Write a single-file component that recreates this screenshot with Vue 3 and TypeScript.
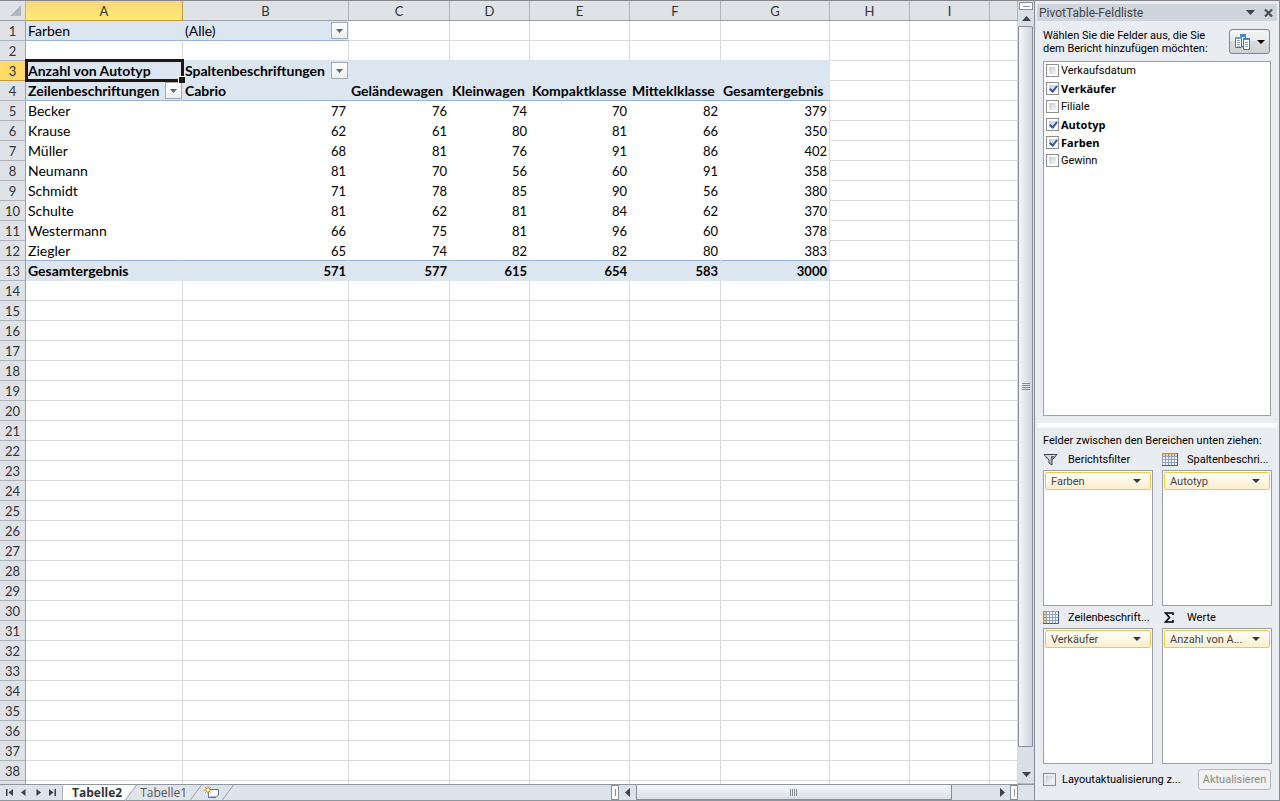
<script setup lang="ts">
import { ref } from 'vue'

interface Field { name: string; checked: boolean }
interface Area { key: string; label: string; icon: string; item: string }

const columns = ['A', 'B', 'C', 'D', 'E', 'F', 'G', 'H', 'I', '']
const pivot: Record<number, string[]> = {
  1: ['Farben', '(Alle)'],
  3: ['Anzahl von Autotyp', 'Spaltenbeschriftungen'],
  4: ['Zeilenbeschriftungen', 'Cabrio', 'Geländewagen', 'Kleinwagen', 'Kompaktklasse', 'Mitteklklasse', 'Gesamtergebnis'],
  5: ['Becker', '77', '76', '74', '70', '82', '379'],
  6: ['Krause', '62', '61', '80', '81', '66', '350'],
  7: ['Müller', '68', '81', '76', '91', '86', '402'],
  8: ['Neumann', '81', '70', '56', '60', '91', '358'],
  9: ['Schmidt', '71', '78', '85', '90', '56', '380'],
  10: ['Schulte', '81', '62', '81', '84', '62', '370'],
  11: ['Westermann', '66', '75', '81', '96', '60', '378'],
  12: ['Ziegler', '65', '74', '82', '82', '80', '383'],
  13: ['Gesamtergebnis', '571', '577', '615', '654', '583', '3000'],
}
const numberedRows = 38

const fields = ref<Field[]>([
  { name: 'Verkaufsdatum', checked: false },
  { name: 'Verkäufer', checked: true },
  { name: 'Filiale', checked: false },
  { name: 'Autotyp', checked: true },
  { name: 'Farben', checked: true },
  { name: 'Gewinn', checked: false },
])
const deferLayout = ref(false)

const areas: Area[] = [
  { key: 'filter', label: 'Berichtsfilter', icon: 'filter', item: 'Farben' },
  { key: 'cols', label: 'Spaltenbeschri...', icon: 'cols', item: 'Autotyp' },
  { key: 'rows', label: 'Zeilenbeschrift...', icon: 'rows', item: 'Verkäufer' },
  { key: 'values', label: 'Werte', icon: 'sigma', item: 'Anzahl von A...' },
]

const cellText = (row: number, col: number): string => pivot[row]?.[col] ?? ''
const hasFilter = (row: number, col: number): boolean =>
  (row === 1 && col === 1) || (row === 3 && col === 1) || (row === 4 && col === 0)

function cellClass(row: number, col: number): Record<string, boolean> {
  const inPivot = col < 7
  return {
    num: row >= 5 && row <= 13 && col > 0,
    bold: row === 3 || row === 4 || row === 13,
    band: (row === 1 && col < 2) || (inPivot && (row === 3 || row === 4 || row === 13)),
    plain: inPivot && row >= 5 && row <= 12,
    edge: col === 6 && row >= 5 && row <= 12,
    rule: (row === 1 && col < 2) || (inPivot && (row === 4 || row === 12)),
    above: inPivot && row === 2,
    active: row === 3 && col === 0,
  }
}
</script>

<template>
  <div class="app">
    <main class="book">
      <div class="grid-area">
        <div class="grid">
          <table>
            <colgroup>
              <col class="w-head" />
              <col v-for="(c, i) in columns" :key="i" :class="'w-' + (c || 'rest')" />
            </colgroup>
            <thead>
              <tr>
                <th class="corner"><svg width="12" height="12" viewBox="0 0 12 12"><path d="M11 0V11H0Z" fill="#b3b7bb" /></svg></th>
                <th v-for="(c, i) in columns" :key="i" scope="col" :class="{ selected: c === 'A' }">{{ c }}</th>
              </tr>
            </thead>
            <tbody>
              <tr v-for="r in numberedRows + 1" :key="r">
                <th scope="row" :class="{ selected: r === 3 }">{{ r > numberedRows ? '' : r }}</th>
                <td v-for="(c, i) in columns" :key="i" :class="cellClass(r, i)">
                  <span v-if="cellText(r, i)">{{ cellText(r, i) }}</span>
                  <button v-if="hasFilter(r, i)" class="drop" type="button" aria-label="Filter">
                    <svg width="7" height="4" viewBox="0 0 7 4"><path d="M0 0H7L3.500 4Z" fill="#5c6570" /></svg>
                  </button>
                  <i v-if="r === 3 && i === 0" class="cursor"></i>
                </td>
              </tr>
            </tbody>
          </table>
        </div>
        <div class="vscroll">
          <div class="split-v"></div>
          <button type="button" class="arrow-v" aria-label="Nach oben"><svg width="9" height="5" viewBox="0 0 9 5"><path d="M4.500 0L9 5H0Z" fill="#40444a" /></svg></button>
          <div class="thumb-v"><svg width="8" height="8" viewBox="0 0 8 8"><path d="M0 .5H8M0 2.500H8M0 4.500H8M0 6.500H8" stroke="#868c94" /></svg></div>
          <button type="button" class="arrow-v down" aria-label="Nach unten"><svg width="9" height="5" viewBox="0 0 9 5"><path d="M0 0H9L4.500 5Z" fill="#40444a" /></svg></button>
        </div>
      </div>

      <div class="bottom">
        <nav class="tabs">
          <div class="steps">
            <button type="button" aria-label="Erstes Blatt"><svg width="7" height="7" viewBox="0 0 7 7"><path d="M0 0H1.500V7H0ZM7 0V7L2.500 3.500Z" fill="#3b4048" /></svg></button>
            <button type="button" aria-label="Vorheriges Blatt"><svg width="7" height="7" viewBox="0 0 7 7"><path d="M5.500 0V7L1 3.500Z" fill="#3b4048" /></svg></button>
            <button type="button" aria-label="Nächstes Blatt"><svg width="7" height="7" viewBox="0 0 7 7"><path d="M1.500 0V7L6 3.500Z" fill="#3b4048" /></svg></button>
            <button type="button" aria-label="Letztes Blatt"><svg width="7" height="7" viewBox="0 0 7 7"><path d="M0 0V7L4.500 3.500ZM5.500 0H7V7H5.500Z" fill="#3b4048" /></svg></button>
          </div>
          <button type="button" class="tab current">Tabelle2</button>
          <svg class="slant" width="12" height="16" viewBox="0 0 12 16"><path d="M0 0H11.500L0 16Z" fill="#fff" /><path d="M11.500 0L0 15.500" stroke="#989ea6" fill="none" /></svg>
          <button type="button" class="tab">Tabelle1</button>
          <svg class="slant" width="12" height="16" viewBox="0 0 12 16"><path d="M11.500 0L0 15.500" stroke="#989ea6" fill="none" /></svg>
          <button type="button" class="tab new" aria-label="Tabellenblatt einfügen">
            <svg width="16" height="13" viewBox="0 0 16 13">
              <path d="M4.500 3.500H14.500V9L12 11.500H4.500Z" fill="#fff" stroke="#596f9e" />
              <path d="M6 10H12L14 8V11H6Z" fill="#a9bbdc" />
              <path d="M4 0V8M0 4H8M1.200 1.200L6.800 6.800M6.800 1.200L1.200 6.800" stroke="#df8b20" />
              <circle cx="4" cy="4" r="1.500" fill="#fff3b8" />
            </svg>
          </button>
          <svg class="slant" width="12" height="16" viewBox="0 0 12 16"><path d="M11.500 0L0 15.500" stroke="#989ea6" fill="none" /></svg>
        </nav>
        <div class="hscroll">
          <div class="split-h"></div>
          <button type="button" class="arrow-h" aria-label="Nach links"><svg width="5" height="9" viewBox="0 0 5 9"><path d="M5 0V9L0 4.500Z" fill="#40444a" /></svg></button>
          <div class="track-h"><div class="thumb-h"><svg width="8" height="7" viewBox="0 0 8 7"><path d="M.5 0V7M2.500 0V7M4.500 0V7M6.500 0V7" stroke="#868c94" /></svg></div></div>
          <button type="button" class="arrow-h right" aria-label="Nach rechts"><svg width="5" height="9" viewBox="0 0 5 9"><path d="M0 0V9L5 4.500Z" fill="#40444a" /></svg></button>
          <div class="split-h"></div>
        </div>
        <div class="bottom-corner"></div>
      </div>
    </main>

    <aside class="pane">
      <header class="pane-title">
        <h2>PivotTable-Feldliste</h2>
        <button type="button" aria-label="Optionen"><svg width="9" height="5" viewBox="0 0 9 5"><path d="M0 0H9L4.500 5Z" fill="#3f4349" /></svg></button>
        <button type="button" aria-label="Schließen"><svg width="9" height="8" viewBox="0 0 9 8"><path d="M1 .5L8 7.500M8 .5L1 7.500" stroke="#4b4e53" stroke-width="2.200" /></svg></button>
      </header>

      <div class="intro">
        <p>Wählen Sie die Felder aus, die Sie<br />dem Bericht hinzufügen möchten:</p>
        <button type="button" class="layout" aria-label="Layout">
          <svg width="16" height="16" viewBox="0 0 16 16">
            <path d="M5.500 .5H10.500V12.500H5.500Z" fill="#fff" stroke="#4a70b4" /><path d="M5 0H11V3H5Z" fill="#4f83d6" />
            <path d="M.5 3.500H6.500V13.500H.5Z" fill="#fff" stroke="#4a70b4" /><path d="M0 3H7V5H0Z" fill="#6e9be2" /><path d="M2 6.500H5M2 8.500H5M2 10.500H5M2 12.500H5" stroke="#8ba7d2" />
            <path d="M8.500 4.500H14.500V15.500H8.500Z" fill="#fff" stroke="#4a70b4" /><path d="M8 4H15V6H8Z" fill="#4f83d6" /><path d="M10 8.500H13M10 10.500H13M10 12.500H13" stroke="#8ba7d2" />
          </svg>
          <svg width="8" height="4" viewBox="0 0 8 4"><path d="M0 0H8L4 4Z" fill="#000" /></svg>
        </button>
      </div>

      <div class="fields">
        <label v-for="f in fields" :key="f.name" :class="{ on: f.checked }">
          <input v-model="f.checked" type="checkbox" /><span>{{ f.name }}</span>
        </label>
      </div>

      <div class="divider"></div>

      <p class="hint">Felder zwischen den Bereichen unten ziehen:</p>
      <div class="areas">
        <section v-for="a in areas" :key="a.key">
          <h3>
            <svg v-if="a.icon === 'filter'" width="16" height="13" viewBox="0 0 16 13">
              <path d="M1 1.500H14L9 7V12L6 10V7Z" fill="#d5d8dc" stroke="#3d4146" /><path d="M8 3H12L8.500 7V11L7.500 10Z" fill="#6c7077" />
            </svg>
            <svg v-else-if="a.icon === 'sigma'" width="16" height="13" viewBox="0 0 16 13">
              <path d="M11 4V2H3.500L7.500 6.500L3.500 11H11V9" fill="none" stroke="#000" stroke-width="1.600" />
            </svg>
            <svg v-else width="16" height="13" viewBox="0 0 16 13">
              <path d="M0 0H16V13H0Z" fill="#8ca3c4" />
              <path d="M1 1H3V3H1ZM4 1H6V3H4ZM7 1H9V3H7ZM10 1H12V3H10ZM13 1H15V3H13ZM1 4H3V6H1ZM4 4H6V6H4ZM7 4H9V6H7ZM10 4H12V6H10ZM13 4H15V6H13ZM1 7H3V9H1ZM4 7H6V9H4ZM7 7H9V9H7ZM10 7H12V9H10ZM13 7H15V9H13ZM1 10H3V12H1ZM4 10H6V12H4ZM7 10H9V12H7ZM10 10H12V12H10ZM13 10H15V12H13Z" fill="#f5f9ff" />
              <template v-if="a.icon === 'cols'"><path d="M0 0H16V3H0Z" fill="#b9903f" /><path d="M1 1H3V3H1ZM4 1H6V3H4ZM7 1H9V3H7ZM10 1H12V3H10ZM13 1H15V3H13Z" fill="#f5d27a" /></template>
              <template v-else><path d="M0 0H3V13H0Z" fill="#b9903f" /><path d="M1 1H3V3H1ZM1 4H3V6H1ZM1 7H3V9H1ZM1 10H3V12H1Z" fill="#f5d27a" /></template>
              <path d="M15.500 0V12.500H0" fill="none" stroke="#3f5f95" />
            </svg>
            <span>{{ a.label }}</span>
          </h3>
          <div class="well">
            <button type="button" class="chip">
              <span>{{ a.item }}</span>
              <svg width="8" height="4" viewBox="0 0 8 4"><path d="M0 0H8L4 4Z" fill="#33363b" /></svg>
            </button>
          </div>
        </section>
      </div>

      <footer>
        <label><input v-model="deferLayout" type="checkbox" /><span>Layoutaktualisierung z...</span></label>
        <button type="button" class="update" disabled>Aktualisieren</button>
      </footer>
    </aside>
  </div>
</template>

<style>
body { margin: 0; }
</style>

<style scoped>
* { box-sizing: border-box; }
button { padding: 0; border: 0; background: none; font: inherit; color: inherit; display: flex; align-items: center; justify-content: center; }
svg { display: block; flex: none; }
h2, h3, p { margin: 0; font: inherit; }

.app { display: flex; height: 100vh; overflow: hidden; border-top: 1px solid #86868a; background: #e9edf2; font-family: Roboto, "Noto Sans", sans-serif; font-size: 11px; color: #000; }
.book { flex: 1; min-width: 0; display: flex; flex-direction: column; }
.grid-area { flex: 1; min-height: 0; display: flex; }
.grid { flex: 1; min-width: 0; overflow: hidden; background: #fff; }

table { table-layout: fixed; width: 100%; border-collapse: separate; border-spacing: 0; font: 14px/18px Lato, sans-serif; }
.w-head { width: 26px; }
.w-A { width: 157px; }
.w-B { width: 166px; }
.w-C { width: 101px; }
.w-D, .w-H, .w-I { width: 80px; }
.w-E { width: 100px; }
.w-F { width: 91px; }
.w-G { width: 109px; }
th, td { height: 20px; padding: 0 2px; white-space: nowrap; overflow: hidden; }
th { font-weight: 400; font-size: 13px; text-align: center; color: #333; background: #dfe2e7; border-right: 1px solid #aeb3b9; border-bottom: 1px solid #aeb3b9; }
thead th { border-bottom-color: #989ea5; }
tbody th { border-right-color: #989ea5; }
th.selected { background: #ffda66; border-color: #c99a3c; }
thead th.selected { background: linear-gradient(#f9d57c, #ffec72); }
.corner svg { margin-left: 8px; }
td { position: relative; border-right: 1px solid #d9dadb; border-bottom: 1px solid #d9dadb; text-align: left; }
td.num { text-align: right; font-size: 13px; }
td.bold { font-weight: 700; }
td.plain { border-color: #fff; }
td.edge { border-right-color: #d9dadb; }
td.band { background: #dce6f1; border-color: #dce6f1; }
td.above { border-bottom-color: #dce6f1; }
td.rule { border-bottom-color: #95b3d7; }
td.active { overflow: visible; }
.drop { position: absolute; right: 0; top: 1px; width: 17px; height: 17px; border: 1px solid #a3aab3; background: linear-gradient(#fff, #eceff3); }
.cursor { position: absolute; z-index: 1; top: -2px; right: -2px; bottom: -2px; left: -1px; border: 3px solid #1f1713; }
.cursor::after { content: ""; position: absolute; right: -4px; bottom: -4px; width: 6px; height: 6px; background: #1f1713; border: 1px solid #fff; border-right: 0; border-bottom: 0; }

.vscroll { width: 16px; display: flex; flex-direction: column; background: #d9dfe8; }
.split-v { height: 8px; margin: 1px 1px 0; border: 1px solid #8b9099; background: linear-gradient(#8b9099, #8b9099) center / 7px 1px no-repeat #fff; }
.arrow-v { height: 16px; }
.arrow-v.down { height: 37px; padding-top: 18px; border-bottom: 1px solid #b5bcc6; }
.thumb-v { flex: 1; display: flex; align-items: center; justify-content: center; border: 1px solid #868d97; border-radius: 1px; background: linear-gradient(90deg, #f3f6fa, #cfd5dd); margin-right: 1px; }

.bottom { height: 17px; display: flex; background: #dde3eb; border-top: 1px solid #8e969f; border-bottom: 1px solid #8e969f; }
.tabs { flex: 1; display: flex; min-width: 0; font: 12px/15px "Open Sans", sans-serif; color: #555; }
.steps { width: 63px; display: flex; justify-content: space-around; padding: 0 2px; border-right: 1px solid #aab1ba; }
.tab { padding: 0 3px; background: #e2e6ec; }
.tab.current { padding-left: 9px; background: #fff; font-weight: 700; color: #333; }
.tab.new { width: 20px; padding: 0; background: none; }
.hscroll { width: 407px; display: flex; }
.split-h { width: 8px; border: 1px solid #8b9099; background: linear-gradient(#8b9099, #8b9099) center / 1px 7px no-repeat #fff; }
.arrow-h { width: 17px; }
.arrow-h.right { width: 15px; }
.track-h { flex: 1; display: flex; }
.thumb-h { width: 88%; display: flex; align-items: center; justify-content: center; border: 1px solid #868d97; border-top: 0; background: linear-gradient(#f5f7fa, #dadfe6); }
.bottom-corner { width: 16px; }

.pane { width: 246px; display: flex; flex-direction: column; padding: 3px 2px 6px; border: solid #868b93; border-width: 0 1px 1px 1px; }
.pane-title { display: flex; align-items: center; height: 17px; padding-left: 2px; background: #cdd4dc; color: #444; }
.pane-title h2 { flex: 1; font-size: 12px; line-height: 16px; }
.pane-title button { width: 18px; height: 17px; }
.intro { display: flex; justify-content: space-between; padding: 8px 7px 0 6px; height: 40px; line-height: 13px; white-space: nowrap; }
.layout { width: 41px; height: 25px; gap: 6px; border: 1px solid #858585; border-radius: 3px; background: linear-gradient(#f4f4f4, #ebebeb 50%, #dcdcdc 50%, #d0d0d0); }
.fields { flex: 1; margin: 0 6px; border: 1px solid #9ba0a6; background: #fff; }
.fields label { display: flex; align-items: flex-start; height: 18px; padding: 2px 0 0 2px; gap: 2px; line-height: 13px; }
.fields label.on { font-family: "Open Sans", sans-serif; font-weight: 700; }
input[type="checkbox"] { appearance: none; flex: none; width: 13px; height: 13px; margin: 0; border: 1px solid #8e8f8f; background: linear-gradient(135deg, #c6cbd2, #f6f7f8) content-box #fff; padding: 2px; position: relative; }
input[type="checkbox"]:checked::after { content: ""; position: absolute; left: 4px; top: 1px; width: 3px; height: 6px; border: solid #3d559b; border-width: 0 2px 2px 0; transform: rotate(40deg); }
.divider { height: 5px; margin: 7px 0 6px; background: linear-gradient(#fff, #fff 50%, #f4f6f8); }
.hint { padding-left: 6px; line-height: 14px; white-space: nowrap; }
.areas { display: grid; grid-template-columns: 1fr 1fr; column-gap: 9px; padding: 0 5px 0 6px; }
section { min-width: 0; }
h3 { display: flex; align-items: center; height: 22px; gap: 9px; line-height: 15px; }
h3 span, .chip span, footer span { white-space: nowrap; }
.well { height: 136px; padding: 1px; border: 1px solid #9ba0a6; background: #fff; }
.chip { width: 100%; height: 18px; padding: 0 9px 0 5px; gap: 4px; border: 1px solid #f0c64c; border-radius: 2px; background: linear-gradient(#fff, #fdeecb); color: #444; }
.chip span { flex: 1; text-align: left; line-height: 15px; }
footer { display: flex; align-items: center; justify-content: space-between; height: 30px; padding: 0 6px; }
footer label { display: flex; align-items: center; gap: 6px; line-height: 15px; }
.update { width: 73px; height: 21px; border: 1px solid #b4b6b9; border-radius: 3px; background: #f2f2f3; color: #8c8c8c; }
</style>
